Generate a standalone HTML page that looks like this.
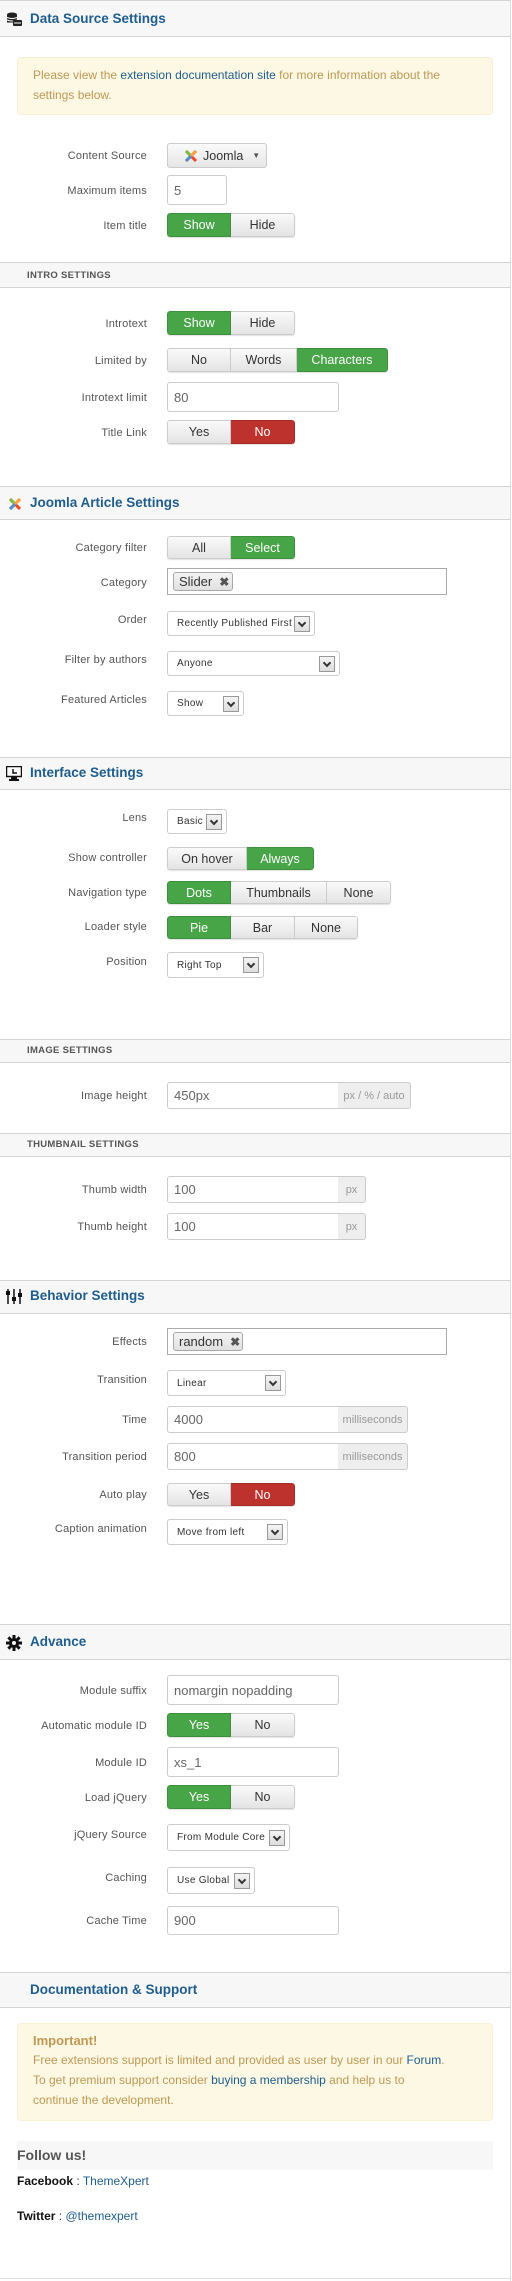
<!DOCTYPE html>
<html><head><meta charset="utf-8"><style>
*{box-sizing:border-box;margin:0;padding:0}
body{width:512px;height:2281px;position:relative;background:#fff;font-family:"Liberation Sans",sans-serif;overflow:hidden}
.a{position:absolute}
.vr{position:absolute;left:510px;top:0;width:1px;height:2281px;background:#ddd}
.hd{position:absolute;left:0;width:510px;background:#f7f7f7;border-top:1px solid #d4d4d4;border-bottom:1px solid #d4d4d4}
.ht{position:absolute;left:30px;font-size:13.5px;font-weight:bold;color:#1e5d8f;line-height:16px}
.sub{position:absolute;left:27px;font-size:9.5px;font-weight:bold;color:#555;letter-spacing:0.3px;line-height:12px}
.lbl{position:absolute;right:365px;font-size:11px;color:#555;line-height:14px;white-space:nowrap;letter-spacing:0.2px}
.bg{position:absolute;display:flex;border-radius:3px;overflow:hidden;box-shadow:0 1px 1px rgba(0,0,0,.12)}
.bg span{display:flex;align-items:center;justify-content:center;font-size:12.5px;color:#333;background:linear-gradient(#fafafa,#e4e4e4);border:1px solid #ccc;border-left:none}
.bg span:first-child{border-left:1px solid #ccc;border-radius:3px 0 0 3px}
.bg span:last-child{border-radius:0 3px 3px 0}
.bg span.g{background:#47a447;color:#fff;border-color:#3d8f3d}
.bg span.r{background:#bd322c;color:#fff;border-color:#a52a25}
.in{position:absolute;border:1px solid #ccc;border-radius:3px;background:#fff;font-size:13px;color:#666;padding-left:6px;display:flex;align-items:center}
.ad{position:absolute;border:1px solid #ccc;border-left:none;border-radius:0 3px 3px 0;background:#eee;font-size:11px;color:#999;display:flex;align-items:center;justify-content:center}
.sl{position:absolute;border:1px solid #ccc;border-radius:3px;background:#fff;font-size:10px;color:#333;padding-left:9px;display:flex;align-items:center;letter-spacing:0.3px}
.sl i{position:absolute;right:4px;top:50%;margin-top:-8px;width:16px;height:16px;border:1px solid #999;background:linear-gradient(#f4f4f4,#ddd)}
.sl i:after{content:"";position:absolute;left:4px;top:3px;width:4px;height:4px;border-right:2px solid #333;border-bottom:2px solid #333;transform:rotate(45deg)}
.tag{position:absolute;border:1px solid #aaa;border-radius:3px;background:linear-gradient(#f4f4f4,#e0e0e0);font-size:13px;color:#333;display:flex;align-items:center;padding-left:5px}
.tag b{margin-left:7px;font-size:12px;color:#555}
.nt{position:absolute;left:17px;width:476px;background:#fcf8e3;border:1px solid #fbeed5;border-radius:4px;color:#c09853;font-size:12px;line-height:20px;padding:7px 15px}
.nt a{color:#1e5d8f;text-decoration:none}
</style></head><body>
<div class="vr"></div>

<div class="hd" style="top:0;height:37px"></div>
<svg class="a" style="left:6px;top:12px" width="17" height="15" viewBox="0 0 17 15"><ellipse cx="6" cy="2.5" rx="5" ry="2" fill="#222"/><rect x="1" y="2.5" width="10" height="8" fill="#222"/><path d="M1 5.5q5 2 10 0M1 8q5 2 10 0" stroke="#fff" fill="none"/><rect x="7" y="8" width="9" height="6" rx="1" fill="#222"/><path d="M8 11h7" stroke="#fff"/></svg>
<div class="ht" style="top:11px">Data Source Settings</div>
<div class="nt" style="top:57px;height:58px">Please view the <a>extension documentation site</a> for more information about the settings below.</div>

<div class="lbl" style="top:149px">Content Source</div>
<div class="a" style="left:167px;top:143px;width:100px;height:25px;border:1px solid #ccc;border-radius:3px;background:linear-gradient(#fafafa,#e6e6e6);font-size:12.5px;color:#333;display:flex;align-items:center;padding-left:15px">
<svg width="16" height="16" viewBox="0 0 16 16" style="margin-right:4px"><path d="M3 3l10 10M13 3L3 13" stroke="#f44321" stroke-width="3"/><path d="M3 3l5 5" stroke="#7ac143" stroke-width="3"/><path d="M13 3l-5 5" stroke="#f9a541" stroke-width="3"/><path d="M3 13l5-5" stroke="#5091cd" stroke-width="3"/></svg>Joomla <span style="font-size:8px;margin-left:9px;color:#555">▼</span></div>
<div class="lbl" style="top:184px">Maximum items</div>
<div class="in" style="left:167px;top:175px;width:60px;height:30px">5</div>
<div class="lbl" style="top:219px">Item title</div>
<div class="bg" style="left:167px;top:213px;height:24px"><span class="g" style="width:64px">Show</span><span style="width:64px">Hide</span></div>

<div class="hd" style="top:262px;height:26px"></div>
<div class="sub" style="top:270px">INTRO SETTINGS</div>
<div class="lbl" style="top:317px">Introtext</div>
<div class="bg" style="left:167px;top:311px;height:24px"><span class="g" style="width:64px">Show</span><span style="width:64px">Hide</span></div>
<div class="lbl" style="top:354px">Limited by</div>
<div class="bg" style="left:167px;top:348px;height:24px"><span style="width:64px">No</span><span style="width:66px">Words</span><span class="g" style="width:91px">Characters</span></div>
<div class="lbl" style="top:391px">Introtext limit</div>
<div class="in" style="left:167px;top:382px;width:172px;height:30px">80</div>
<div class="lbl" style="top:426px">Title Link</div>
<div class="bg" style="left:167px;top:420px;height:24px"><span style="width:64px">Yes</span><span class="r" style="width:64px">No</span></div>

<div class="hd" style="top:486px;height:34px"></div>
<svg class="a" style="left:7px;top:496px" width="16" height="16" viewBox="0 0 16 16"><path d="M3 3l10 10M13 3L3 13" stroke="#f44321" stroke-width="3"/><path d="M3 3l5 5" stroke="#7ac143" stroke-width="3"/><path d="M13 3l-5 5" stroke="#f9a541" stroke-width="3"/><path d="M3 13l5-5" stroke="#5091cd" stroke-width="3"/></svg>
<div class="ht" style="top:495px">Joomla Article Settings</div>
<div class="lbl" style="top:541px">Category filter</div>
<div class="bg" style="left:167px;top:536px;height:23px"><span style="width:64px">All</span><span class="g" style="width:64px">Select</span></div>
<div class="lbl" style="top:576px">Category</div>
<div class="in" style="left:167px;top:568px;width:280px;height:27px;border-color:#aaa;border-radius:0"></div>
<div class="tag" style="left:173px;top:572px;width:60px;height:19px">Slider<b>✖</b></div>
<div class="lbl" style="top:613px">Order</div>
<div class="sl" style="left:167px;top:611px;width:148px;height:25px">Recently Published First<i></i></div>
<div class="lbl" style="top:653px">Filter by authors</div>
<div class="sl" style="left:167px;top:651px;width:173px;height:25px">Anyone<i></i></div>
<div class="lbl" style="top:693px">Featured Articles</div>
<div class="sl" style="left:167px;top:691px;width:77px;height:25px">Show<i></i></div>

<div class="hd" style="top:757px;height:33px"></div>
<svg class="a" style="left:6px;top:766px" width="16" height="15" viewBox="0 0 16 15"><rect x="0.5" y="0.5" width="15" height="10" fill="#fff" stroke="#111" stroke-width="1.5"/><rect x="2" y="2" width="12" height="7" fill="#fff"/><path d="M7 3v4h4" stroke="#111" stroke-width="1.5" fill="none"/><rect x="5" y="11" width="6" height="2" fill="#111"/><rect x="3" y="13" width="10" height="2" fill="#111"/></svg>
<div class="ht" style="top:765px">Interface Settings</div>
<div class="lbl" style="top:811px">Lens</div>
<div class="sl" style="left:167px;top:809px;width:60px;height:25px">Basic<i></i></div>
<div class="lbl" style="top:851px">Show controller</div>
<div class="bg" style="left:167px;top:847px;height:23px"><span style="width:80px">On hover</span><span class="g" style="width:67px">Always</span></div>
<div class="lbl" style="top:886px">Navigation type</div>
<div class="bg" style="left:167px;top:881px;height:23px"><span class="g" style="width:64px">Dots</span><span style="width:96px">Thumbnails</span><span style="width:64px">None</span></div>
<div class="lbl" style="top:920px">Loader style</div>
<div class="bg" style="left:167px;top:916px;height:23px"><span class="g" style="width:64px">Pie</span><span style="width:64px">Bar</span><span style="width:63px">None</span></div>
<div class="lbl" style="top:955px">Position</div>
<div class="sl" style="left:167px;top:952px;width:97px;height:26px">Right Top<i></i></div>

<div class="hd" style="top:1039px;height:24px"></div>
<div class="sub" style="top:1045px">IMAGE SETTINGS</div>
<div class="lbl" style="top:1089px">Image height</div>
<div class="in" style="left:167px;top:1082px;width:172px;height:27px;border-radius:3px 0 0 3px">450px</div>
<div class="ad" style="left:338px;top:1082px;width:73px;height:27px">px / % / auto</div>

<div class="hd" style="top:1133px;height:24px"></div>
<div class="sub" style="top:1139px">THUMBNAIL SETTINGS</div>
<div class="lbl" style="top:1183px">Thumb width</div>
<div class="in" style="left:167px;top:1176px;width:172px;height:27px;border-radius:3px 0 0 3px">100</div>
<div class="ad" style="left:338px;top:1176px;width:28px;height:27px">px</div>
<div class="lbl" style="top:1220px">Thumb height</div>
<div class="in" style="left:167px;top:1213px;width:172px;height:27px;border-radius:3px 0 0 3px">100</div>
<div class="ad" style="left:338px;top:1213px;width:28px;height:27px">px</div>

<div class="hd" style="top:1280px;height:34px"></div>
<svg class="a" style="left:6px;top:1289px" width="16" height="15" viewBox="0 0 16 15"><path d="M2 0v15M8 0v15M14 0v15" stroke="#111" stroke-width="1.5"/><rect x="0" y="2" width="4" height="4" fill="#111"/><rect x="6" y="8" width="4" height="4" fill="#111"/><rect x="12" y="4" width="4" height="4" fill="#111"/></svg>
<div class="ht" style="top:1288px">Behavior Settings</div>
<div class="lbl" style="top:1335px">Effects</div>
<div class="in" style="left:167px;top:1328px;width:280px;height:27px;border-color:#aaa;border-radius:0"></div>
<div class="tag" style="left:173px;top:1332px;width:70px;height:19px">random<b>✖</b></div>
<div class="lbl" style="top:1373px">Transition</div>
<div class="sl" style="left:167px;top:1370px;width:119px;height:26px">Linear<i></i></div>
<div class="lbl" style="top:1413px">Time</div>
<div class="in" style="left:167px;top:1406px;width:172px;height:27px;border-radius:3px 0 0 3px">4000</div>
<div class="ad" style="left:338px;top:1406px;width:70px;height:27px">milliseconds</div>
<div class="lbl" style="top:1450px">Transition period</div>
<div class="in" style="left:167px;top:1443px;width:172px;height:27px;border-radius:3px 0 0 3px">800</div>
<div class="ad" style="left:338px;top:1443px;width:70px;height:27px">milliseconds</div>
<div class="lbl" style="top:1488px">Auto play</div>
<div class="bg" style="left:167px;top:1483px;height:23px"><span style="width:64px">Yes</span><span class="r" style="width:64px">No</span></div>
<div class="lbl" style="top:1522px">Caption animation</div>
<div class="sl" style="left:167px;top:1519px;width:121px;height:26px">Move from left<i></i></div>

<div class="hd" style="top:1624px;height:36px"></div>
<svg class="a" style="left:6px;top:1635px" width="16" height="16" viewBox="0 0 16 16"><g fill="#111"><circle cx="8" cy="8" r="5"/><rect x="6.5" y="0" width="3" height="16"/><rect x="0" y="6.5" width="16" height="3"/><rect x="6.5" y="0" width="3" height="16" transform="rotate(45 8 8)"/><rect x="6.5" y="0" width="3" height="16" transform="rotate(-45 8 8)"/></g><circle cx="8" cy="8" r="2" fill="#f7f7f7"/></svg>
<div class="ht" style="top:1634px">Advance</div>
<div class="lbl" style="top:1684px">Module suffix</div>
<div class="in" style="left:167px;top:1675px;width:172px;height:30px">nomargin nopadding</div>
<div class="lbl" style="top:1719px">Automatic module ID</div>
<div class="bg" style="left:167px;top:1713px;height:24px"><span class="g" style="width:64px">Yes</span><span style="width:64px">No</span></div>
<div class="lbl" style="top:1756px">Module ID</div>
<div class="in" style="left:167px;top:1747px;width:172px;height:30px">xs_1</div>
<div class="lbl" style="top:1791px">Load jQuery</div>
<div class="bg" style="left:167px;top:1785px;height:24px"><span class="g" style="width:64px">Yes</span><span style="width:64px">No</span></div>
<div class="lbl" style="top:1828px">jQuery Source</div>
<div class="sl" style="left:167px;top:1824px;width:123px;height:27px">From Module Core<i></i></div>
<div class="lbl" style="top:1871px">Caching</div>
<div class="sl" style="left:167px;top:1867px;width:88px;height:27px">Use Global<i></i></div>
<div class="lbl" style="top:1914px">Cache Time</div>
<div class="in" style="left:167px;top:1906px;width:172px;height:29px">900</div>

<div class="hd" style="top:1972px;height:36px"></div>
<div class="ht" style="top:1982px">Documentation &amp; Support</div>
<div class="nt" style="top:2023px;height:98px;padding-top:8px"><b style="font-size:13px;line-height:18px;display:block">Important!</b>Free extensions support is limited and provided as user by user in our <a>Forum</a>.<br>To get premium support consider <a>buying a membership</a> and help us to<br>continue the development.</div>
<div class="a" style="left:17px;top:2141px;width:476px;height:29px;background:#f7f7f7;font-size:14px;font-weight:bold;color:#555;line-height:29px">Follow us!</div>
<div class="a" style="left:17px;top:2173px;font-size:12px;color:#333;line-height:16px"><b style="color:#111">Facebook</b> : <span style="color:#1e5d8f">ThemeXpert</span></div>
<div class="a" style="left:17px;top:2208px;font-size:12px;color:#333;line-height:16px"><b style="color:#111">Twitter</b> : <span style="color:#1e5d8f">@themexpert</span></div>
<div class="a" style="left:0;top:2278px;width:511px;height:1px;background:#ddd"></div>
</body></html>
